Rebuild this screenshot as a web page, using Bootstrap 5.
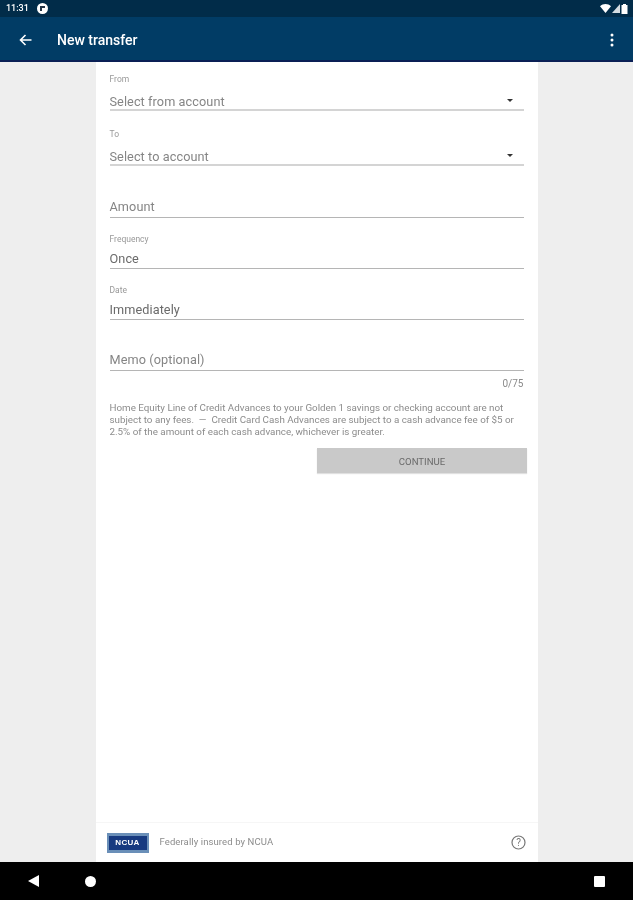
<!DOCTYPE html>
<html lang="en">
<head>
<meta charset="utf-8">
<title>New transfer</title>
<link rel="stylesheet" href="https://cdn.jsdelivr.net/npm/bootstrap@5.3.0/dist/css/bootstrap.min.css">
<style>
html,body{height:100%;margin:0;overflow:hidden}
body{font-family:Roboto,"Liberation Sans",sans-serif;background:#eee;color:#777}
.screen{height:900px;width:633px;filter:blur(.45px)}
.status-strip{height:17px;background:#012c49;color:#fff;font-size:9px;font-weight:500;padding:0 5px 0 6px}
.app-strip{height:45px;background:#013c65;border-bottom:2px solid #0a1f55;color:#fff;padding:3px 19px 0 19px}
.app-title{font-size:14px;font-weight:500;margin-left:25px;line-height:1}
.page-body{flex:1 1 auto;min-height:0}
.sheet{width:442px;background:#fff;padding:0 14px 0 14px}
.field{border-bottom:1px solid #b5b5b5;position:relative}
.field-sel{border-bottom:2px solid #d4d4d4}
.lbl{font-size:8.5px;line-height:10px;color:#999;height:10px}
.val{font-size:12.7px;line-height:16px;color:#858585;letter-spacing:.08px}
.val-dark{color:#6a6a6a}
.caret-down{position:absolute;right:11px;bottom:7px;width:0;height:0;border-left:3px solid transparent;border-right:3px solid transparent;border-top:3px solid #333}
.f-from{margin-top:12px;height:37px}
.f-from .val,.f-to .val{margin-top:10px}
.f-to{margin-top:18px;height:37px}
.f-amount{margin-top:18px;height:34px;padding-top:15px}
.f-freq{margin-top:16px;height:35px}
.f-freq .val,.f-date .val{margin-top:7px}
.f-date{margin-top:16px;height:35px}
.f-memo{margin-top:16px;height:35px;padding-top:16px}
.counter{font-size:10px;line-height:12px;color:#8a8a8a;text-align:right;margin-top:7px}
.note{font-size:9.8px;line-height:11.9px;color:#8c8c8c;margin-top:12px;white-space:nowrap}
.btn.go-btn:disabled{width:210px;height:25px;background:#c9c9c9;color:#6a6a6a;font-size:9.6px;line-height:27px;border:0;border-radius:0;padding:0 0 0 1px;margin:10px -3px 0 0;display:block;opacity:1;box-shadow:0 1px 1px rgba(0,0,0,.12)}
.foot-row{height:40px;border-top:1px solid #f6f6f6;margin:0 -14px;padding:0 12px 0 11px}
.foot-text{font-size:9.5px;color:#8c8c8c;margin-left:11px;letter-spacing:.1px}
.ncua{width:42px;height:20px;background:#6a8fb8;padding:3px 2px;display:flex}
.ncua span{flex:1;background:#173a80;color:#fff;font:700 8px/14px "Liberation Sans",sans-serif;text-align:center;letter-spacing:.3px}
.nav-strip{height:38px;background:#000;padding:0 27px 0 28px}
</style>
</head>
<body>
<div class="screen d-flex flex-column">
  <div class="status-strip d-flex align-items-center justify-content-between">
    <div class="d-flex align-items-center gap-2">
      <span>11:31</span>
      <svg width="11" height="11" viewBox="0 0 11 11"><circle cx="5.5" cy="5.5" r="5.5" fill="#fff"/><path d="M3 3h5v2H5v3H3z" fill="#234"/></svg>
    </div>
    <div class="d-flex align-items-center" style="gap:1px">
      <svg width="11" height="9" viewBox="0 0 11 9"><path d="M0 2.2C3-.7 8-.7 11 2.2L5.5 9z" fill="#fff"/></svg>
      <svg width="8" height="9" viewBox="0 0 8 9"><path d="M8 0v9H0z" fill="#d5dde2"/></svg>
      <svg width="7" height="10" viewBox="0 0 7 10"><path d="M2 0h3v1h1.500v9H.5V1H2z" fill="#fff"/></svg>
    </div>
  </div>
  <div class="app-strip d-flex align-items-center">
    <svg width="13" height="12" viewBox="0 0 13 12"><path d="M12.500 6H1.500M6.500 1 1.500 6l5 5" fill="none" stroke="#fff" stroke-width="1.600"/></svg>
    <div class="app-title">New transfer</div>
    <svg class="ms-auto" width="4" height="14" viewBox="0 0 4 14"><circle cx="2" cy="2" r="1.500" fill="#fff"/><circle cx="2" cy="7" r="1.500" fill="#fff"/><circle cx="2" cy="12" r="1.500" fill="#fff"/></svg>
  </div>
  <div class="page-body d-flex justify-content-center">
    <div class="sheet d-flex flex-column">
      <div class="field field-sel f-from"><div class="lbl">From</div><div class="val">Select from account</div><i class="caret-down"></i></div>
      <div class="field field-sel f-to"><div class="lbl">To</div><div class="val">Select to account</div><i class="caret-down"></i></div>
      <div class="field f-amount"><div class="val">Amount</div></div>
      <div class="field f-freq"><div class="lbl">Frequency</div><div class="val val-dark">Once</div></div>
      <div class="field f-date"><div class="lbl">Date</div><div class="val val-dark">Immediately</div></div>
      <div class="field f-memo"><div class="val">Memo (optional)</div></div>
      <div class="counter">0/75</div>
      <p class="note mb-0">Home Equity Line of Credit Advances to your Golden 1 savings or checking account are not<br>subject to any fees.&nbsp; &mdash;&nbsp; Credit Card Cash Advances are subject to a cash advance fee of $5 or<br>2.5% of the amount of each cash advance, whichever is greater.</p>
      <button type="button" class="btn go-btn align-self-end" disabled>CONTINUE</button>
      <div class="foot-row mt-auto d-flex align-items-center">
        <div class="ncua"><span>NCUA</span></div>
        <span class="foot-text">Federally insured by NCUA</span>
        <svg class="ms-auto" width="15" height="15" viewBox="0 0 15 15"><circle cx="7.500" cy="7.500" r="6.500" fill="none" stroke="#777" stroke-width="1.200"/><text x="7.500" y="11" text-anchor="middle" font-size="10" font-family="Roboto" fill="#777">?</text></svg>
      </div>
    </div>
  </div>
  <div class="nav-strip d-flex align-items-center justify-content-between">
    <svg width="11" height="12" viewBox="0 0 11 12"><path d="M11 0v12L0 6z" fill="#fff"/></svg>
    <svg width="11" height="11" viewBox="0 0 11 11" style="margin-left:46px"><circle cx="5.500" cy="5.500" r="5.500" fill="#fff"/></svg>
    <svg class="ms-auto" width="11" height="11" viewBox="0 0 11 11" style="margin-right:1px"><rect width="11" height="11" rx="1" fill="#fff"/></svg>
  </div>
</div>
</body>
</html>
